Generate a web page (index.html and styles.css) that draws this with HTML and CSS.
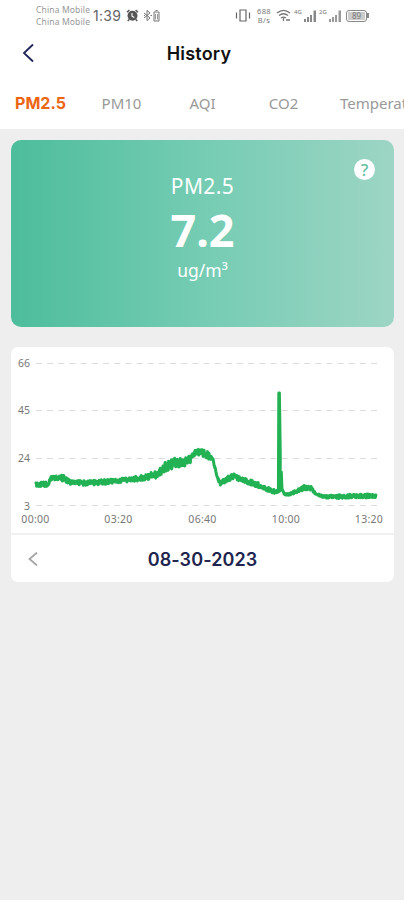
FILE: index.html
```html
<!DOCTYPE html>
<html lang="en">
<head>
    <meta charset="UTF-8">
    <meta name="viewport" content="width=device-width, initial-scale=1.0">
    <title>History</title>
    <link rel="stylesheet" href="styles.css">
</head>
<body>
    <header class="top">
        <div class="status-bar">
            <div class="status-left">
                <div class="carriers">
                    <span>China Mobile</span>
                    <span>China Mobile</span>
                </div>
                <span class="time">1:39</span>
                <svg class="alarm" width="13" height="13" viewBox="0 0 13 13">
                    <path d="M1 3.2L3.4 1M12 3.2L9.6 1M3 10.5L1.8 12M10 10.5l1.2 1.5" stroke="#555" stroke-width="1.5"/>
                    <circle cx="6.5" cy="6.8" r="5" fill="#555"/>
                    <path d="M6 4v3.2l2.4 1.2" fill="none" stroke="#fff" stroke-width="1.1"/>
                </svg>
                <svg width="18" height="13" viewBox="0 0 18 13" fill="none" stroke="#777">
                    <path d="M1 4l6 5-3 2.7V1.3L7 4 1 9M1 6.5h1M7.5 6.5h1.5"/>
                    <path d="M11 3h5v9h-5zM12.5 1.5h2"/>
                    <path d="M12.5 5v5.5M14.5 5v5.5" stroke="#999"/>
                </svg>
            </div>
            <div class="status-right">
                <svg class="vibrate" width="16" height="13" viewBox="0 0 16 13" fill="none" stroke="#666" stroke-width="1.2">
                    <path d="M5 1h6v11H5zM1.5 3.5v6M14.5 3.5v6"/>
                </svg>
                <div class="speed">
                    <span>688</span>
                    <span>B/s</span>
                </div>
                <svg class="wifi" width="15" height="13" viewBox="0 0 15 13" fill="none" stroke="#777" stroke-width="1.3">
                    <path d="M1 4c4-3.3 9-3.3 13 0M3 6.5c3-2.3 6-2.3 9 0M5 9c1.7-1.3 3.3-1.3 5 0"/>
                    <path d="M7.5 9v3M10 11h4"/>
                </svg>
                <span class="net">4G</span>
                <svg class="signal" width="14" height="12" viewBox="0 0 14 12" fill="#888">
                    <path d="M1 9h2v3H1zM4 7h2v5H4zM7 5h2v7H7z"/>
                    <path d="M10.5 0.5h2.5V12h-2.5z"/>
                </svg>
                <span class="net net-2g">2G</span>
                <svg class="signal" width="14" height="12" viewBox="0 0 14 12" fill="#999">
                    <path d="M1 9h2v3H1zM4 7h2v5H4zM7 5h2v7H7z"/>
                    <path d="M10.5 0.5h2.5V12h-2.5z"/>
                </svg>
                <div class="battery"><span>89</span></div>
                <i class="battery-tip"></i>
            </div>
        </div>
        <div class="title-bar">
            <svg class="back" width="12" height="20" viewBox="0 0 12 20">
                <path d="M11 1.5L2 10l9 8.5" fill="none" stroke="#1f2357" stroke-width="1.8"/>
            </svg>
            <h1>History</h1>
        </div>
        <nav class="tabs">
            <a class="tab active">PM2.5</a>
            <a class="tab">PM10</a>
            <a class="tab">AQI</a>
            <a class="tab">CO2</a>
            <a class="tab tab-last">Temperature</a>
        </nav>
    </header>

    <main>
        <section class="reading">
            <span class="help">?</span>
            <div class="reading-name">PM2.5</div>
            <div class="reading-value">7.2</div>
            <div class="reading-unit">ug/m³</div>
        </section>

        <section class="history">
            <svg class="chart" width="382" height="186" viewBox="0 0 382 186">
                <g class="grid">
                    <path d="M25 16.5h341M25 63.5h341M25 111.5h341M25 158.5h341"/>
                </g>
                <g class="y-labels">
                    <text x="19" y="19.5">66</text>
                    <text x="19" y="67">45</text>
                    <text x="19" y="115">24</text>
                    <text x="19" y="162.5">3</text>
                </g>
                <polyline class="line" id="line"/>
                <g class="x-labels">
                    <text x="24.5" y="175.5">00:00</text>
                    <text x="107.5" y="175.5">03:20</text>
                    <text x="191.5" y="175.5">06:40</text>
                    <text x="275" y="175.5">10:00</text>
                    <text x="358" y="175.5">13:20</text>
                </g>
            </svg>
            <div class="date-bar">
                <svg class="prev" width="10" height="14" viewBox="0 0 10 14">
                    <path d="M9 0.5L1.5 7l7.5 6.5" fill="none" stroke="#a3a3a3" stroke-width="1.7"/>
                </svg>
                <span class="date">08-30-2023</span>
            </div>
        </section>
    </main>

    <script src="script.js"></script>
</body>
</html>
```

FILE: styles.css
```css
* {
    margin: 0;
    padding: 0;
    box-sizing: border-box;
}

body {
    min-height: 100vh;
    background: #eeeeee;
    font-family: 'Noto Sans', sans-serif;
    overflow-x: hidden;
}

.top {
    height: 129px;
    background: #fff;
    overflow: hidden;
}

.status-bar {
    height: 31px;
    padding: 0 35px 0 36px;
    display: flex;
    justify-content: space-between;
    align-items: center;
    color: #777;
}

.status-left,
.status-right {
    display: flex;
    align-items: center;
}

.carriers {
    display: flex;
    flex-direction: column;
    width: 57px;
    font-size: 8.5px;
    line-height: 12px;
    letter-spacing: 0.15px;
    white-space: nowrap;
    color: #999;
}

.time {
    width: 33px;
    font-family: 'Inter', sans-serif;
    font-size: 14px;
    letter-spacing: 0.3px;
    color: #666;
}

.alarm {
    margin-right: 4px;
}

.speed {
    display: flex;
    flex-direction: column;
    width: 16px;
    margin: 0 4px 0 5px;
    font-size: 7.5px;
    line-height: 9px;
    letter-spacing: 0.4px;
    text-align: center;
}

.net {
    width: 9px;
    margin: -8px 0 0 3px;
    font-size: 6px;
    line-height: 8px;
}

.net-2g {
    margin-left: 2px;
}

.battery {
    width: 21px;
    height: 12px;
    margin-left: 4px;
    border: 1px solid #888;
    border-radius: 3px;
    padding: 1px;
    font-size: 8px;
    line-height: 8px;
    text-align: center;
}

.battery span {
    display: block;
    background: #ccc;
}

.battery-tip {
    width: 2px;
    height: 5px;
    background: #888;
}

.title-bar {
    height: 46px;
    padding: 0 22px;
    display: grid;
    grid-template-columns: 40px 1fr 40px;
    align-items: center;
}

.back {
    margin-top: -3px;
}

h1 {
    font-family: 'Inter', sans-serif;
    font-size: 18px;
    font-weight: 600;
    line-height: 24px;
    letter-spacing: 0.2px;
    text-align: center;
    color: #111;
    padding-right: 6px;
}

.tabs {
    height: 51px;
    display: grid;
    grid-template-columns: repeat(5, 81px);
    align-items: center;
    white-space: nowrap;
}

.tab {
    font-size: 15px;
    text-align: center;
    color: #999;
}

.tab.active {
    font-family: 'Inter', sans-serif;
    font-size: 16px;
    font-weight: 700;
    color: #ec6513;
}

.tab-last {
    text-align: left;
    padding-left: 16px;
}

.reading {
    position: relative;
    height: 187px;
    margin: 11px 10px 0 11px;
    padding-top: 31px;
    border-radius: 10px;
    background: linear-gradient(90deg, #4dbd9b, #75ccb3 50%, #9dd5c4);
    color: #fff;
    text-align: center;
}

.help {
    position: absolute;
    top: 19px;
    right: 19px;
    width: 21px;
    height: 21px;
    border-radius: 50%;
    background: #fff;
    color: #64bfa3;
    font-size: 17px;
    font-weight: 500;
    line-height: 21px;
}

.reading-name {
    font-size: 21px;
    line-height: 30px;
    letter-spacing: 0.4px;
}

.reading-value {
    font-size: 45px;
    font-weight: 700;
    line-height: 58px;
}

.reading-unit {
    font-size: 17.5px;
    line-height: 22px;
}

.history {
    height: 235px;
    margin: 20px 10px 0 11px;
    border-radius: 7px;
    background: #fff;
}

.chart {
    display: block;
}

.grid path {
    fill: none;
    stroke: #dcdcdc;
    stroke-width: 1;
    stroke-dasharray: 6 5.17;
}

.line {
    fill: none;
    stroke: #22b153;
    stroke-width: 3;
    stroke-linejoin: round;
    stroke-linecap: round;
}

.y-labels text,
.x-labels text {
    font-size: 10.5px;
    fill: #777;
}

.y-labels text {
    text-anchor: end;
}

.x-labels text {
    text-anchor: middle;
    letter-spacing: 0.3px;
}

.date-bar {
    height: 49px;
    padding: 0 17px;
    border-top: 2px solid #f0f0f0;
    display: grid;
    grid-template-columns: 40px 1fr 40px;
    align-items: center;
}

.date {
    padding-top: 2px;
    text-align: center;
    font-family: 'Inter', sans-serif;
    font-size: 18px;
    font-weight: 600;
    letter-spacing: 0.1px;
    color: #20244f;
}
```

FILE: script.js
```js
// [x, y, noise] along the curve
const curve = [
    [25, 138, 2], [37, 137, 2.5], [40, 131.5, 2], [53, 131, 3], [59, 135.5, 2],
    [75, 136, 2.5], [94, 135, 2.5], [109, 133.5, 2], [124, 132, 2.5], [137, 129, 3.5],
    [146, 127.5, 3.5], [153, 121, 5], [163, 116, 5.5], [173, 115.5, 4], [181, 111, 4],
    [185, 104, 2.5], [191, 106, 4], [197, 108, 4], [202, 113, 1.5], [206, 129, 1],
    [209, 136, 2.5], [215, 133, 2.5], [222, 129, 3], [230, 132.5, 2], [244, 136.5, 3],
    [254, 141, 2], [262, 144.5, 2.5], [267, 145, 1.5]
];
const spike = [[267.4, 145], [267.8, 46], [268.4, 46], [269.3, 110], [269, 144], [270.3, 125], [271, 142], [273, 146]];
const tail = [
    [273, 147, 1], [278, 147.5, 1], [286, 144, 1.5], [294, 140.5, 2.5], [299, 140.5, 2.5],
    [304, 146, 1], [312, 149.5, 1], [322, 150, 2], [340, 149, 2], [354, 149, 2], [365, 149, 2]
];

let seed = 17;
function random() {
    seed = (seed * 16807) % 2147483647;
    return seed / 2147483647 * 2 - 1;
}

function addNoise(keys) {
    const points = [];
    for (let i = 0; i < keys.length - 1; i++) {
        const [x1, y1, n1] = keys[i];
        const [x2, y2, n2] = keys[i + 1];
        for (let x = x1; x < x2; x += 0.35) {
            const t = (x - x1) / (x2 - x1);
            points.push([x, y1 + (y2 - y1) * t + random() * (n1 + (n2 - n1) * t)]);
        }
    }
    return points;
}

const points = [...addNoise(curve), ...spike, ...addNoise(tail)];
document.getElementById('line').setAttribute('points', points.map(p => p.join(',')).join(' '));
```
